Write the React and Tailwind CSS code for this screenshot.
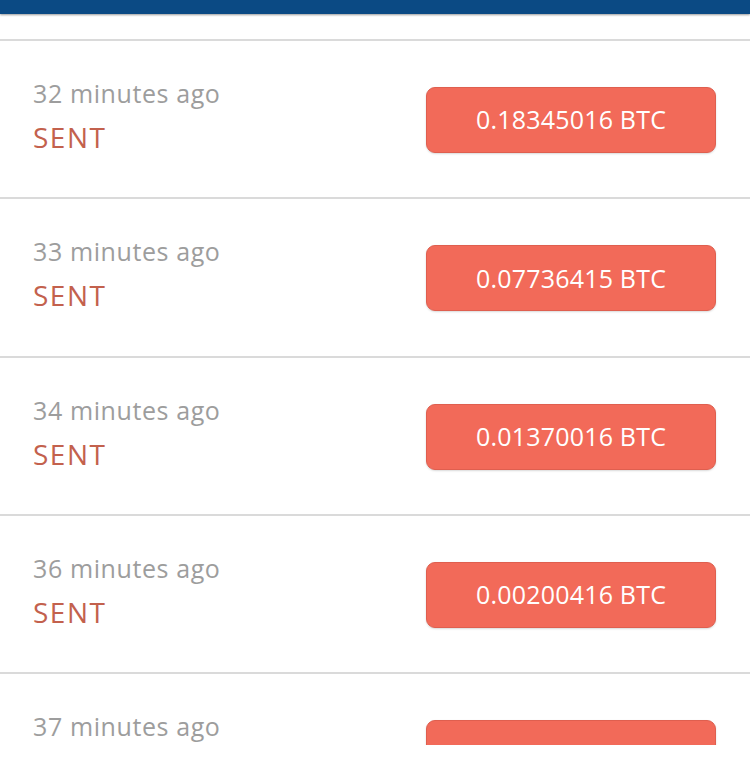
import React from 'react';

const transactions = [
  { id: 1, time: '32 minutes ago', amount: '0.18345016 BTC', status: 'SENT' },
  { id: 2, time: '33 minutes ago', amount: '0.07736415 BTC', status: 'SENT' },
  { id: 3, time: '34 minutes ago', amount: '0.01370016 BTC', status: 'SENT' },
  { id: 4, time: '36 minutes ago', amount: '0.00200416 BTC', status: 'SENT' },
  // last row is scrolled past the bottom edge, only the time shows
  { id: 5, time: '37 minutes ago', amount: '', status: '' },
];

function TxRow({ tx }) {
  return (
    <div className="h-[158.25px] shrink-0 border-t-2 border-[#dadada] flex items-center justify-between pl-[33px] pr-[34px]">
      <div className="flex flex-col pb-[6px]">
        <span className="text-[25px] leading-[36px] text-[#9d9d9d] tracking-[0.6px]">{tx.time}</span>
        <span className="text-[28px] leading-[40px] h-[40px] text-[#c3614d] tracking-[1.5px] mt-[6px]">{tx.status}</span>
      </div>
      <button className="w-[290px] h-[66px] mt-[2px] rounded-[9px] bg-[#f26a59] border border-[#df5f4f] text-white text-[25px] tracking-[0.2px] shadow-[0_1px_2px_rgba(0,0,0,0.15)] flex items-center justify-center">
        {tx.amount}
      </button>
    </div>
  );
}

export default function App() {
  return (
    <div className="w-[750px] h-[760px] bg-white flex flex-col overflow-hidden font-['Open_Sans',sans-serif]">
      {/* Header bar */}
      <div className="h-[14px] shrink-0 bg-[#0b4a84] shadow-[0_1px_2px_rgba(0,0,0,0.4)]"></div>
      <div className="h-[25px] shrink-0"></div>

      {/* Transactions list */}
      <div className="h-[706px] shrink-0 overflow-hidden flex flex-col">
        {transactions.map((tx) => (
          <TxRow key={tx.id} tx={tx} />
        ))}
      </div>

      <div className="flex-1 bg-white"></div>
    </div>
  );
}
